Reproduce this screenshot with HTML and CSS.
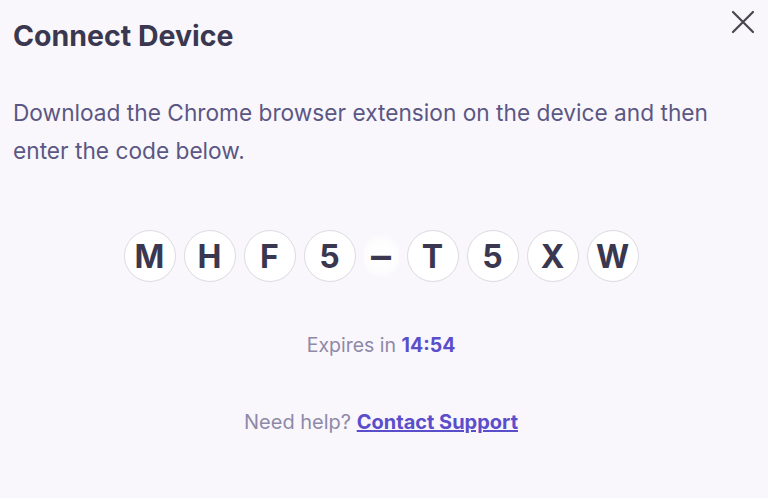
FILE: index.html
```html
<!DOCTYPE html>
<html lang="en">
<head>
<meta charset="utf-8">
<title>Connect Device</title>
<link rel="stylesheet" href="styles.css">
</head>
<body>
<div class="dialog">
  <header class="dialog-head">
    <h1 class="title">Connect Device</h1>
    <button class="close" aria-label="Close">
      <svg width="24" height="24" viewBox="0 0 24 24"><path d="M2 2 L22 22 M22 2 L2 22" stroke="#47454f" stroke-width="2.2" stroke-linecap="round"/></svg>
    </button>
  </header>
  <p class="lead">Download the Chrome browser extension on the device and then enter the code below.</p>
  <div class="code">
    <span class="chip">M</span>
    <span class="chip">H</span>
    <span class="chip">F</span>
    <span class="chip">5</span>
    <span class="sep">–</span>
    <span class="chip">T</span>
    <span class="chip">5</span>
    <span class="chip">X</span>
    <span class="chip">W</span>
  </div>
  <p class="expires">Expires in <strong>14:54</strong></p>
  <p class="help">Need help? <a href="#">Contact Support</a></p>
</div>
</body>
</html>
```
FILE: styles.css
```css
html, body {
  margin: 0;
  background: #f9f7fb;
}
body {
  font-family: Inter, "Noto Sans", sans-serif;
  color: #5a5680;
}
.dialog {
  padding: 0 19px 0 13px;
}
.dialog-head {
  display: flex;
  justify-content: space-between;
  align-items: flex-start;
}
.title {
  margin: 19px 0 0;
  font-size: 28.5px;
  font-weight: 700;
  color: #3a3750;
  line-height: 34px;
}
.close {
  margin: 10px -6px 0 0;
  padding: 0;
  border: 0;
  background: none;
  width: 24px;
  height: 24px;
}
.lead {
  margin: 41px -6px 0 0;
  font-size: 22.7px;
  line-height: 38px;
  color: #5b5784;
}
.code {
  display: flex;
  justify-content: center;
  align-items: center;
  gap: 8px;
  margin-top: 60px;
}
.chip {
  width: 50px;
  height: 50px;
  border: 1px solid #dcdae2;
  border-radius: 50%;
  background: #fff;
  display: flex;
  align-items: center;
  justify-content: center;
  font-size: 32px;
  font-weight: 700;
  color: #3a3750;
}
/* hyphen between the two code halves, on a soft white halo */
.sep {
  width: 35px;
  height: 52px;
  display: flex;
  align-items: center;
  justify-content: center;
  font-size: 40px;
  font-weight: 600;
  line-height: 1;
  color: #3a3750;
  background: radial-gradient(circle, #ffffff 0, rgba(255,255,255,0.8) 45%, rgba(255,255,255,0) 72%);
}
.expires {
  margin: 51px 0 0;
  text-align: center;
  font-size: 19.5px;
  color: #8e89a8;
}
.expires strong {
  color: #5b4ecb;
}
.help {
  margin: 53px 0 0;
  text-align: center;
  font-size: 20px;
  color: #8e89a8;
}
.help a {
  color: #5b4ecb;
  font-weight: 700;
}
```
